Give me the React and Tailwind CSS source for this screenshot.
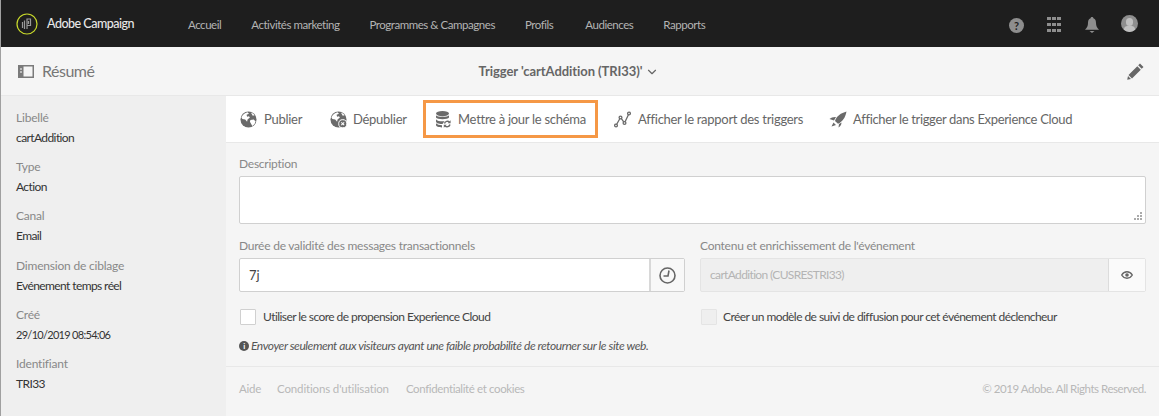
import React from 'react';
import { ChevronDown } from 'lucide-react';

const font = "font-['Lato','Noto_Sans',sans-serif]";

const navItems = ['Accueil', 'Activités marketing', 'Programmes & Campagnes', 'Profils', 'Audiences', 'Rapports'];

const sideItems = [
  ['Libellé', 'cartAddition'],
  ['Type', 'Action'],
  ['Canal', 'Email'],
  ['Dimension de ciblage', 'Evénement temps réel'],
  ['Créé', '29/10/2019 08:54:06'],
  ['Identifiant', 'TRI33'],
];

const Globe = ({ badge }) => (
  <svg width="17" height="17" viewBox="0 0 18 18" className="shrink-0">
    <circle cx="9" cy="9" r="8.500" fill="#6a6a6a" />
    <path d="M1.500 6.500C3 4 5 2 8 1.400l1.500 1.600-2.500 1 .5 2 2-.5 1 1.500-2.500 2-.5 2.500-2-2.500-3-.5zM11 9.500l3.500-.5 2 2c-.5 2-2 4-3.500 5l-1-2-1.500-2.500zM11.500 1.500c1.500.5 3 1.500 4 3l-2 .5z" fill="#fff" />
    {badge && <circle cx="13.500" cy="13.500" r="4.300" fill="#6a6a6a" stroke="#fff" />}
    {badge && <path d="M12 12l3 3M15 12l-3 3" stroke="#fff" strokeWidth="1.100" />}
  </svg>
);

const DbIcon = () => (
  <svg width="15" height="17" viewBox="0 0 15 17" className="shrink-0">
    <ellipse cx="6.500" cy="2.600" rx="6.500" ry="2.600" fill="#6a6a6a" />
    <path d="M0 4.200c1 2.200 12 2.200 13 0v2.300c-1 2.200-12 2.200-13 0zM0 8.200c1 2 6 2.400 8.500 2L6.500 13c-3 .2-6.500-.6-6.500-2.500zM0 12.200c1 1.300 3.500 1.900 6 2v2.200c-3 0-6-.8-6-2.400z" fill="#6a6a6a" />
    <path d="M8.500 12.500a3 3 0 0 1 5-1.400M14 13.500a3 3 0 0 1-5 1.400" stroke="#6a6a6a" strokeWidth="1.400" fill="none" />
    <path d="M14.600 9.300v3h-3zM7.800 16.700v-3h3z" fill="#6a6a6a" />
  </svg>
);

const ChartIcon = () => (
  <svg width="17" height="17" viewBox="0 0 17 17" fill="none" stroke="#6a6a6a" strokeWidth="1.300" className="shrink-0">
    <circle cx="2" cy="14.500" r="1.400" />
    <circle cx="6.500" cy="6.500" r="1.400" />
    <circle cx="10.500" cy="12" r="1.400" />
    <circle cx="15" cy="2.500" r="1.400" />
    <path d="M2.700 13.200L5.800 7.700M7.400 7.600L9.700 10.800M11.100 10.700L14.400 3.800" />
  </svg>
);

const RocketIcon = () => (
  <svg width="18" height="17" viewBox="0 0 18 17" className="shrink-0">
    <path d="M17.500.5C12 2 7.500 5 6 10l3 2.800c4.500-2 7.500-6.500 8.500-12.300z" fill="#6a6a6a" />
    <path d="M.5 8C2 6.500 4.500 5.800 7 6L5 9.500zM10 13l2.500-1.500c0 2-1 3.800-3 5zM4.500 11.500L7 14l-4.500 1.500z" fill="#6a6a6a" />
  </svg>
);

const ToolButton = ({ icon, label, className }) => (
  <div className={`flex items-center gap-[7px] text-[13px] tracking-[-0.28px] whitespace-nowrap text-[#666] ${className}`}>
    {icon}
    <span className="mt-[2px]">{label}</span>
  </div>
);

const Field = ({ label, className, children }) => (
  <div className={className}>
    <p className="text-[12px] leading-[16px] tracking-[-0.24px] text-[#888] mb-[4px] whitespace-nowrap">{label}</p>
    {children}
  </div>
);

const App = () => (
  <div className={`box-border w-[1159px] h-[416px] overflow-hidden border-l border-[#a0a0a0] bg-[#f5f5f5] flex flex-col ${font}`}>
    {/* top bar */}
    <header className="h-[47px] shrink-0 bg-[#1e1e1e] flex items-center pl-[15px] pr-[21px]">
      <svg width="22" height="22" viewBox="0 0 22 22" className="shrink-0">
        <circle cx="11" cy="11" r="10" fill="none" stroke="#c8d92b" strokeWidth="1.200" />
        <path d="M6.500 15V9M8.500 16V7.500M11 16V6h3.500v6.500H11M12.500 8v3" fill="none" stroke="#9a9a9a" strokeWidth="1.200" />
      </svg>
      <span className="ml-[9px] w-[141px] text-[12.500px] tracking-[-0.5px] mt-[1px] font-medium text-[#e8e8e8] whitespace-nowrap">Adobe Campaign</span>
      <nav className="flex items-center gap-[30px] text-[11.500px] tracking-[-0.46px] mt-[2px] text-[#b4b4b4] whitespace-nowrap">
        {navItems.map((n) => (
          <span key={n} className={n === 'Profils' ? 'pr-[2px]' : ''}>{n}</span>
        ))}
      </nav>
      <div className="ml-auto flex items-center">
        <span className="w-[15px] h-[15px] mt-[3px] rounded-full bg-[#8e8e8e] text-[#1e1e1e] text-[11px] font-bold leading-[15px] text-center">?</span>
        <div className="grid grid-cols-3 gap-x-[1px] gap-y-[3px] ml-[23px] mt-[1px]">
          {[...Array(9)].map((_, i) => (
            <span key={i} className="w-[4px] h-[3px] bg-[#8e8e8e]" />
          ))}
        </div>
        <svg width="14" height="17" viewBox="0 0 14 17" className="ml-[24px] mt-[3px]">
          <path d="M7 0c1 0 1.400.7 1.400 1.300C10.500 2 11 4 11 6c0 3 1 4.800 3 6.700H0C2 10.800 3 9 3 6c0-2 .5-4 2.600-4.700C5.600.7 6 0 7 0zM4.500 14h5l-2.500 2z" fill="#8e8e8e" />
        </svg>
        <span className="w-[17px] h-[17px] rounded-full bg-[#8e8e8e] ml-[22px] mb-[1px] relative overflow-hidden">
          <span className="absolute left-[5px] top-[3px] w-[7px] h-[8px] rounded-full bg-[#c0c0c0]" />
          <span className="absolute left-[3px] top-[11px] w-[11px] h-[7px] rounded-full bg-[#c0c0c0]" />
        </span>
      </div>
    </header>

    {/* title row */}
    <div className="h-[49px] shrink-0 flex items-center pl-[17px] pr-[15px] border-b border-[#e8e8e8] relative">
      <svg width="16" height="13" viewBox="0 0 16 13" className="shrink-0">
        <rect x="0.750" y="0.750" width="14.500" height="11.500" fill="none" stroke="#7a7a7a" strokeWidth="1.500" />
        <rect x="1" y="1" width="4.500" height="11" fill="#7a7a7a" />
        <path d="M2 4h2M2 7h2" stroke="#fff" />
      </svg>
      <span className="ml-[8px] text-[16px] tracking-[-0.5px] text-[#777]">Résumé</span>
      <div className="absolute left-0 right-0 top-[15px] flex justify-center items-center gap-[3px] pr-[22px] text-[13px] tracking-[-0.07px] font-bold text-[#666]">
        <span>Trigger 'cartAddition (TRI33)'</span>
        <ChevronDown size={14} strokeWidth={2} />
      </div>
      <svg width="17" height="17" viewBox="0 0 17 17" className="ml-auto">
        <path d="M13 .5l3.500 3.500-1.800 1.800-3.500-3.500zM10.300 3.200l3.500 3.500L5 15.500 1.500 12zM1 13l3 3-3.800.800z" fill="#666" />
      </svg>
    </div>

    <div className="flex flex-1 min-h-0">
      {/* side panel */}
      <aside className="w-[225px] shrink-0 bg-[#efefef] pl-[15px] pt-[14px]">
        {sideItems.map(([k, v]) => (
          <div key={k} className="h-[49.200px] whitespace-nowrap">
            <p className="text-[12px] leading-[16px] tracking-[-0.2px] text-[#888]">{k}</p>
            {k === 'Créé' ? (
              <p className="text-[11px] leading-[16px] mt-[4px] tracking-[-0.7px] text-[#333]">{v}</p>
            ) : (
              <p className="text-[12px] leading-[16px] mt-[4px] tracking-[-0.6px] text-[#333]">{v}</p>
            )}
          </div>
        ))}
      </aside>

      <main className="flex-1 min-w-0 flex flex-col">
        {/* toolbar */}
        <div className="h-[47px] shrink-0 bg-white border-b border-[#e8e8e8] flex items-center pl-[14px]">
          <ToolButton icon={<Globe />} label="Publier" className="w-[90px]" />
          <ToolButton icon={<Globe badge />} label="Dépublier" className="w-[93px] !gap-[6px]" />
          <div className="h-[38px] w-[175px] border-[3px] border-[#f59846] flex items-center pl-[10px]">
            <ToolButton icon={<DbIcon />} label="Mettre à jour le schéma" />
          </div>
          <ToolButton icon={<ChartIcon />} label="Afficher le rapport des triggers" className="ml-[16px] w-[215px]" />
          <ToolButton icon={<RocketIcon />} label="Afficher le trigger dans Experience Cloud" className="!gap-[6px] !tracking-[-0.33px]" />
        </div>

        {/* form */}
        <div className="flex-1 px-[13px] pt-[13px]">
          <Field label="Description">
            <div className="h-[48px] bg-white border border-[#d0d0d0] rounded-[2px] relative">
              <svg width="8" height="8" viewBox="0 0 8 8" className="absolute right-[3px] bottom-[3px]">
                <path d="M6 0h2v2H6zM3 3h2v2H3zM6 3h2v2H6zM0 6h2v2H0zM3 6h2v2H3zM6 6h2v2H6z" fill="#aaa" />
              </svg>
            </div>
          </Field>
          <div className="flex gap-[15px] mt-[14px]">
            <Field label="Durée de validité des messages transactionnels" className="w-[446px]">
              <div className="h-[34px] flex bg-white border border-[#d0d0d0] rounded-[2px]">
                <div className="flex-1 pl-[9px] text-[13px] leading-[32px] text-[#444]">7j</div>
                <div className="w-[35px] bg-[#f8f8f8] border-l-2 border-[#d8d8d8] flex items-center justify-center">
                  <svg width="17" height="17" viewBox="0 0 17 17" fill="none" stroke="#666" strokeWidth="1.600">
                    <circle cx="8.500" cy="8.500" r="7.500" />
                    <path d="M10 3.500L9 9H4.500" />
                  </svg>
                </div>
              </div>
            </Field>
            <Field label="Contenu et enrichissement de l'événement" className="flex-1">
              <div className="h-[34px] flex bg-[#efefef] border border-[#e4e4e4] rounded-[2px]">
                <div className="flex-1 pl-[9px] text-[12px] tracking-[-0.65px] leading-[32px] text-[#b4b4b4]">cartAddition (CUSRESTRI33)</div>
                <div className="w-[37px] bg-[#fafafa] border-l border-[#dcdcdc] flex items-center justify-center">
                  <svg width="12" height="8" viewBox="0 0 12 8">
                    <path d="M.7 4C2 1.800 4 .8 6 .8S10 1.800 11.300 4C10 6.200 8 7.200 6 7.200S2 6.200.7 4z" fill="none" stroke="#666" strokeWidth="1.400" />
                    <circle cx="6" cy="4" r="1.800" fill="#666" />
                  </svg>
                </div>
              </div>
            </Field>
          </div>
          <div className="flex gap-[15px] mt-[16px]">
            <div className="w-[446px] flex items-center gap-[7px] pl-[1px] text-[12px] tracking-[-0.56px] text-[#444] whitespace-nowrap">
              <span className="w-[16px] h-[16px] bg-white border border-[#d0d0d0] rounded-[1px]" />
              <span>Utiliser le score de propension Experience Cloud</span>
            </div>
            <div className="flex-1 flex items-center gap-[6px] pl-[1px] text-[12px] tracking-[-0.56px] text-[#444] whitespace-nowrap">
              <span className="w-[16px] h-[16px] bg-[#efefef] border border-[#e4e4e4] rounded-[1px]" />
              <span>Créer un modèle de suivi de diffusion pour cet événement déclencheur</span>
            </div>
          </div>
          <div className="flex items-center gap-[2px] mt-[11px] text-[12px] tracking-[-0.43px] italic text-[#555] whitespace-nowrap">
            <span className="w-[10px] h-[10px] rounded-full bg-[#555] text-white text-[8px] not-italic font-bold leading-[10px] text-center">i</span>
            <span>Envoyer seulement aux visiteurs ayant une faible probabilité de retourner sur le site web.</span>
          </div>
        </div>

        {/* footer */}
        <footer className="h-[50px] shrink-0 border-t border-[#e8e8e8] flex items-center px-[13px] pb-[6px] text-[11.500px] tracking-[-0.25px] text-[#b8b8b8] whitespace-nowrap">
          <span>Aide</span>
          <span className="ml-[16px] tracking-[-0.15px]">Conditions d'utilisation</span>
          <span className="ml-[17px] tracking-[-0.38px]">Confidentialité et cookies</span>
          <span className="ml-auto tracking-[-0.47px]">© 2019 Adobe. All Rights Reserved.</span>
        </footer>
      </main>
    </div>
  </div>
);

export default App;
